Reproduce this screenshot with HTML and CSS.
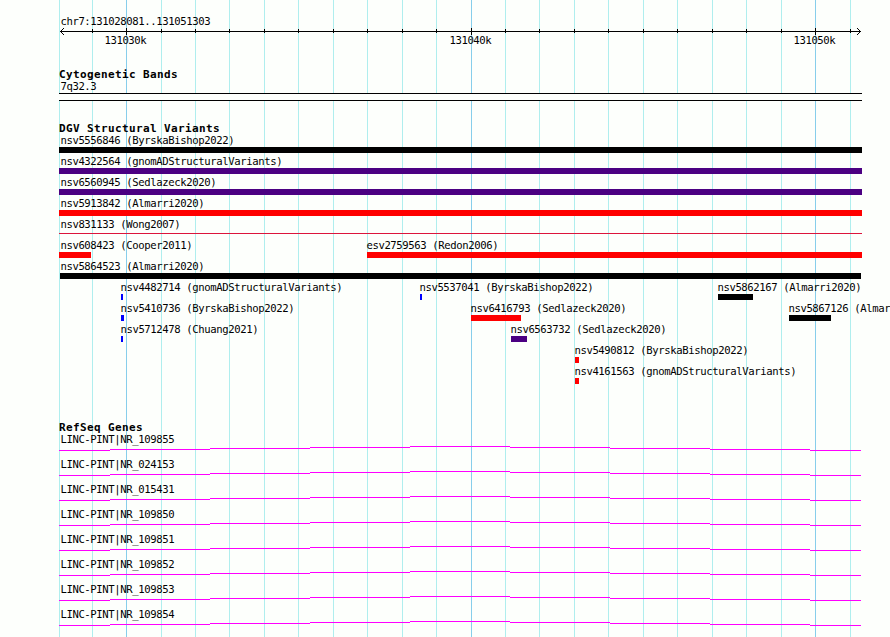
FILE: index.html
```html
<!DOCTYPE html>
<html lang="en">
<head>
<meta charset="utf-8">
<title>chr7:131028081..131051303</title>
<link rel="stylesheet" href="styles.css">
</head>
<body>
<svg class="gridlines" width="890" height="637" shape-rendering="crispEdges">
  <path class="minor" d="M59.5 0v637M92.5 0v637M161.5 0v637M195.5 0v637M229.5 0v637M264.5 0v637M298.5 0v637M333.5 0v637M367.5 0v637M402.5 0v637M436.5 0v637M505.5 0v637M539.5 0v637M574.5 0v637M608.5 0v637M643.5 0v637M677.5 0v637M712.5 0v637M746.5 0v637M781.5 0v637M850.5 0v637"/>
  <path class="major" d="M126.5 0v637M471.5 0v637M815.5 0v637"/>
  <defs>
    <path id="intron" d="M0 4.5h51M51 3.5h100M151 2.5h100M251 1.5h100M351 .5h100M451 1.5h100M551 2.5h100M651 3.5h100M751 4.5h51"/>
  </defs>
</svg>
<main class="browser">
  <header class="ruler">
    <div class="label">chr7:131028081..131051303</div>
    <svg class="axis" width="803" height="9" shape-rendering="crispEdges">
      <path d="M1 4.5h801M33.5 2v4M67.5 1v7M102.5 2v4M136.5 2v4M170.5 2v4M205.5 2v4M239.5 2v4M274.5 2v4M308.5 2v4M343.5 2v4M377.5 2v4M412.5 1v7M446.5 2v4M480.5 2v4M515.5 2v4M549.5 2v4M584.5 2v4M618.5 2v4M653.5 2v4M687.5 2v4M722.5 2v4M756.5 1v7M791.5 2v4"/>
      <path d="M2 3.5h1M3 2.5h1M4 1.5h1M2 5.5h1M3 6.5h1M4 7.5h1M800 3.5h1M799 2.5h1M798 1.5h1M800 5.5h1M799 6.5h1M798 7.5h1"/>
    </svg>
    <div class="ticks">
      <span class="label" style="margin-left:44px">131030k</span>
      <span class="label" style="margin-left:389px">131040k</span>
      <span class="label" style="margin-left:733px">131050k</span>
    </div>
  </header>

  <section class="track bands">
    <h2>Cytogenetic Bands</h2>
    <div class="label">7q32.3</div>
    <div class="band"></div>
  </section>

  <section class="track variants">
    <h2>DGV Structural Variants</h2>
    <div class="row"><div class="feature edge"><div class="label">nsv5556846 (ByrskaBishop2022)</div><div class="bar black" style="width:803px"></div></div></div>
    <div class="row"><div class="feature edge"><div class="label">nsv4322564 (gnomADStructuralVariants)</div><div class="bar purple" style="width:803px"></div></div></div>
    <div class="row"><div class="feature edge"><div class="label">nsv6560945 (Sedlazeck2020)</div><div class="bar purple" style="width:803px"></div></div></div>
    <div class="row"><div class="feature edge"><div class="label">nsv5913842 (Almarri2020)</div><div class="bar red" style="width:803px"></div></div></div>
    <div class="row"><div class="feature edge"><div class="label">nsv831133 (Wong2007)</div><div class="bar thin" style="width:803px"></div></div></div>
    <div class="row">
      <div class="feature edge"><div class="label">nsv608423 (Cooper2011)</div><div class="bar red" style="width:32px"></div></div>
      <div class="feature" style="margin-left:308px"><div class="label">esv2759563 (Redon2006)</div><div class="bar red" style="width:495px"></div></div>
    </div>
    <div class="row"><div class="feature inset" style="margin-left:1px"><div class="label">nsv5864523 (Almarri2020)</div><div class="bar black" style="width:801px"></div></div></div>
    <div class="row">
      <div class="feature" style="margin-left:62px"><div class="label">nsv4482714 (gnomADStructuralVariants)</div><div class="bar blue" style="width:2px"></div></div>
      <div class="feature" style="margin-left:361px"><div class="label">nsv5537041 (ByrskaBishop2022)</div><div class="bar blue" style="width:2px"></div></div>
      <div class="feature" style="margin-left:659px"><div class="label">nsv5862167 (Almarri2020)</div><div class="bar black" style="width:35px"></div></div>
    </div>
    <div class="row">
      <div class="feature" style="margin-left:62px"><div class="label">nsv5410736 (ByrskaBishop2022)</div><div class="bar blue" style="width:3px"></div></div>
      <div class="feature" style="margin-left:412px"><div class="label">nsv6416793 (Sedlazeck2020)</div><div class="bar red" style="width:50px"></div></div>
      <div class="feature" style="margin-left:730px"><div class="label">nsv5867126 (Almarri2020)</div><div class="bar black" style="width:42px"></div></div>
    </div>
    <div class="row">
      <div class="feature" style="margin-left:62px"><div class="label">nsv5712478 (Chuang2021)</div><div class="bar blue" style="width:2px"></div></div>
      <div class="feature" style="margin-left:452px"><div class="label">nsv6563732 (Sedlazeck2020)</div><div class="bar purple" style="width:16px"></div></div>
    </div>
    <div class="row"><div class="feature" style="margin-left:516px"><div class="label">nsv5490812 (ByrskaBishop2022)</div><div class="bar red" style="width:4px"></div></div></div>
    <div class="row"><div class="feature" style="margin-left:516px"><div class="label">nsv4161563 (gnomADStructuralVariants)</div><div class="bar red" style="width:4px"></div></div></div>
  </section>

  <section class="track genes">
    <h2>RefSeq Genes</h2>
    <div class="gene"><div class="label">LINC-PINT|NR_109855</div><svg class="intron" width="802" height="5"><use href="#intron"/></svg></div>
    <div class="gene"><div class="label">LINC-PINT|NR_024153</div><svg class="intron" width="802" height="5"><use href="#intron"/></svg></div>
    <div class="gene"><div class="label">LINC-PINT|NR_015431</div><svg class="intron" width="802" height="5"><use href="#intron"/></svg></div>
    <div class="gene"><div class="label">LINC-PINT|NR_109850</div><svg class="intron" width="802" height="5"><use href="#intron"/></svg></div>
    <div class="gene"><div class="label">LINC-PINT|NR_109851</div><svg class="intron" width="802" height="5"><use href="#intron"/></svg></div>
    <div class="gene"><div class="label">LINC-PINT|NR_109852</div><svg class="intron" width="802" height="5"><use href="#intron"/></svg></div>
    <div class="gene"><div class="label">LINC-PINT|NR_109853</div><svg class="intron" width="802" height="5"><use href="#intron"/></svg></div>
    <div class="gene"><div class="label">LINC-PINT|NR_109854</div><svg class="intron" width="802" height="5"><use href="#intron"/></svg></div>
  </section>
</main>
</body>
</html>
```
FILE: styles.css
```css
body {
  margin: 0;
  height: 637px;
  overflow: hidden;
  background: #fdfffc;
  color: #000;
  font-family: "DejaVu Sans Mono", monospace;
}

.gridlines {
  position: absolute;
  top: 0;
  left: 0;
  z-index: -1;
}

.gridlines .minor { stroke: #afeeee; }
.gridlines .major { stroke: #87ceeb; }

.browser {
  padding: 15px 0 0 59px;
}

.label {
  height: 12px;
  padding-left: 1.4px;
  font-size: 10.6px;
  line-height: 12px;
  letter-spacing: -0.382px;
  white-space: pre;
}

.ruler { height: 53px; }

.axis {
  display: block;
  stroke: #000;
}

.ticks {
  display: grid;
  margin-top: -2px;
}

.ticks .label { grid-area: 1 / 1; }

h2 {
  height: 12px;
  margin: 0;
  font-size: 11px;
  font-weight: bold;
  line-height: 14px;
  letter-spacing: 0.378px;
  white-space: pre;
}

.bands { height: 54px; }

.band {
  box-sizing: border-box;
  width: 803px;
  height: 8px;
  margin-top: 1px;
  border: solid #000;
  border-width: 1px 0;
  background: #fdfffc;
}

.variants { height: 299px; }

.row {
  display: grid;
  grid-template-columns: 831px;
  height: 21px;
}

.feature {
  grid-area: 1 / 1;
  min-width: 0;
}

.feature .label {
  padding-left: 0.4px;
  margin-left: -1px;
}

.feature.edge .label { margin-left: 1px; }
.feature.inset .label { margin-left: 0; }

.bar {
  height: 6px;
  margin-top: 1px;
}

.black { background: #000; }
.purple { background: #4b0082; }
.red { background: #f00; }
.blue { background: #00f; }

.thin {
  height: 1px;
  margin-top: 3px;
  background: #dc143c;
}

.gene { height: 25px; }

.intron {
  display: block;
  margin-top: 1px;
  stroke: #f0f;
  shape-rendering: crispEdges;
}
```
